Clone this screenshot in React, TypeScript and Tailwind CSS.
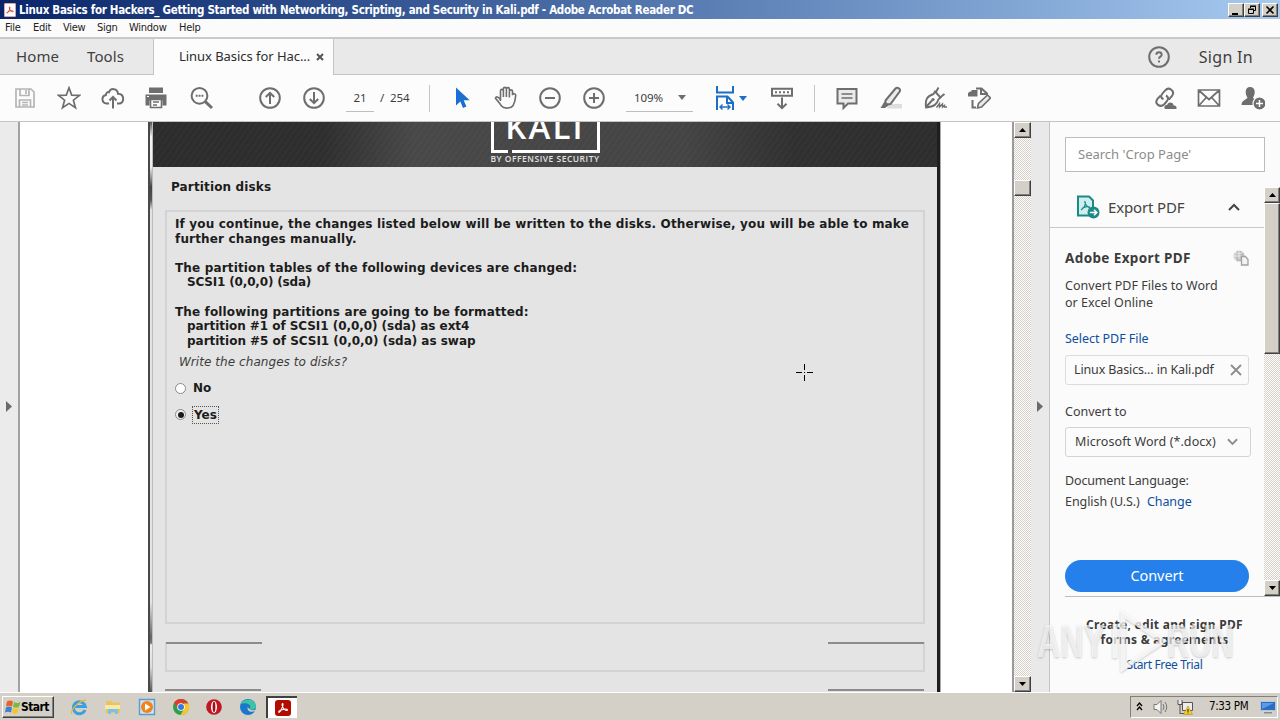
import type { ReactNode } from "react";
import clsx from "clsx";

interface GlyphProps {
  children: ReactNode;
  className?: string;
  box?: string;
}

// 24px line icon used by the toolbars
function Glyph({ children, className, box = "0 0 24 24" }: GlyphProps) {
  return (
    <svg
      viewBox={box}
      fill="none"
      stroke="currentColor"
      strokeWidth="2"
      className={clsx("shrink-0", className ?? "h-6 w-6")}
    >
      {children}
    </svg>
  );
}

function Tool({ children, color = "text-[#6e6e6e]" }: { children: ReactNode; color?: string }) {
  return (
    <button className={clsx("flex h-full w-11 shrink-0 items-center justify-center", color)}>
      <Glyph>{children}</Glyph>
    </button>
  );
}

function AcrobatMark({ className }: { className: string }) {
  return (
    <svg viewBox="0 0 16 16" fill="none" stroke="currentColor" className={className}>
      <path
        d="M7.6 3c-1.6 0-.2 4.6 2 6.6 2.200 1.800 4.200 1.300 3.600.3C12.500 8.700 7 9.300 4.500 10.800c-2.200 1.300-1.600 2.500-.6 2C5.800 11.600 9.300 3 7.600 3z"
        strokeWidth="1.2"
      />
    </svg>
  );
}

const bevel =
  "border border-t-white border-l-white border-r-[#404040] border-b-[#404040] bg-[#d4d0c8] shadow-[inset_-1px_-1px_0_#808080]";

function ScrollButton({ down, className }: { down?: boolean; className?: string }) {
  return (
    <div className={clsx("flex h-4 shrink-0 items-center justify-center", bevel, className)}>
      <svg viewBox="0 0 7 4" className={clsx("h-1 w-[7px]", down && "rotate-180")}>
        <path d="M0 4L3.500 0L7 4z" fill="#000" />
      </svg>
    </div>
  );
}

function TitleBar() {
  return (
    <div className="flex h-[19px] shrink-0 items-center bg-linear-to-r from-[#0a246a] to-[#a6caf0] pr-[2px] pl-1">
      <div className="flex h-[14px] w-3 items-center justify-center rounded-[1px] border border-[#d9a5a5] bg-white text-[#d0201c]">
        <AcrobatMark className="h-3 w-3" />
      </div>
      <span className="ml-[3px] flex-1 text-[11.500px] leading-[18px] font-bold tracking-[-0.3px] whitespace-nowrap text-white [font-family:'DejaVu_Sans_Condensed','DejaVu_Sans',sans-serif]">
        Linux Basics for Hackers_ Getting Started with Networking, Scripting, and Security in Kali.pdf - Adobe Acrobat
        Reader DC
      </span>
      <div className="flex text-black">
        <div className={clsx("h-[14px] w-4", bevel)}>
          <svg viewBox="0 0 14 12" className="h-3 w-[14px]">
            <path d="M3 9h6v2H3z" />
          </svg>
        </div>
        <div className={clsx("h-[14px] w-4", bevel)}>
          <svg viewBox="0 0 14 12" fill="none" stroke="#000" className="h-3 w-[14px]">
            <path d="M5.500 4V2.500h5v4H9M5 2h6M3.500 5.500h5v4h-5zM3 5h6" />
          </svg>
        </div>
        <div className={clsx("ml-[2px] h-[14px] w-4", bevel)}>
          <svg viewBox="0 0 14 12" fill="none" stroke="#000" strokeWidth="1.600" className="h-3 w-[14px]">
            <path d="M3.500 2.500l7 7M10.500 2.500l-7 7" />
          </svg>
        </div>
      </div>
    </div>
  );
}

function MenuBar() {
  return (
    <div className="flex h-[18px] shrink-0 items-center bg-[#fcfbfb] pl-[5px] text-[11px] tracking-[-0.25px] text-[#222] [font-family:'DejaVu_Sans_Condensed','DejaVu_Sans',sans-serif]">
      <span className="w-7">File</span>
      <span className="w-[30px]">Edit</span>
      <span className="w-[34px]">View</span>
      <span className="w-8">Sign</span>
      <span className="w-[50px]">Window</span>
      <span>Help</span>
    </div>
  );
}

function TabBar() {
  return (
    <div className="flex h-[38px] shrink-0 border-t-2 border-[#c9c9c9] bg-[#e9e9e9] text-[#3f3f3f]">
      <div className="flex w-[154px] items-center border-r border-b border-[#c4c4c4] pl-4 text-[15px] tracking-[0.1px]">
        <span className="w-[71px]">Home</span>
        <span>Tools</span>
      </div>
      <div className="flex w-[179px] items-center bg-[#fcfcfc] pl-[25px] text-[13px] text-[#2c2c2c]">
        <span className="w-[137px] tracking-[-0.05px] whitespace-nowrap">Linux Basics for Hac...</span>
        <Glyph box="0 0 8 8" className="h-2 w-2 text-[#555]">
          <path d="M1 1l6 6M7 1L1 7" />
        </Glyph>
      </div>
      <div className="flex flex-1 items-center border-b border-l border-[#c4c4c4] pr-[27px]">
        <Glyph className="mr-[28px] ml-auto h-6 w-6 text-[#6e6e6e]">
          <circle cx="12" cy="12" r="9.800" />
          <path d="M9.300 9.700c0-3.300 5.400-3.300 5.400 0 0 2-2.700 1.900-2.700 4M12 15.500v2" strokeWidth="1.900" />
        </Glyph>
        <span className="text-base tracking-[0.3px]">Sign In</span>
      </div>
    </div>
  );
}

function Toolbar() {
  return (
    <div className="flex h-[47px] shrink-0 items-center border-b border-[#c4c4c4] bg-[#fcfcfc] pl-[3px] text-[#3c3c3c]">
      <Tool color="text-[#b4b4b4]">
        <path d="M3 3h15l3 3v15H3z M7 3v6.500h9V3M13 4v4M6.500 21v-7h11v7M9 16.500h6M9 19h6" strokeWidth="1.700" />
      </Tool>
      <Tool>
        <path d="M12 1.800l2.700 7.300 7.800.3-6.100 4.800 2.100 7.500-6.500-4.300-6.500 4.300 2.100-7.500L1.500 9.400l7.800-.3z" strokeWidth="1.700" />
      </Tool>
      <Tool>
        <path d="M8 17.500H5.500a4.300 4.300 0 0 1-.6-8.500C5 6.500 7 5.800 8 6.200c1.500-4.500 8.500-4.200 9 1.600 7 .2 6.500 9.700 1 9.700h-2" />
        <path d="M12 22.500V11M8.500 14.500L12 11l3.500 3.500" />
      </Tool>
      <Tool>
        <path d="M4 1.500h14V7H4z" fill="currentColor" stroke="none" />
        <path d="M.5 8.500h21v11h-4v-5h-13v5h-4z" fill="currentColor" stroke="none" />
        <path d="M5.500 13.500h11v8h-11zM8 16h6M8 19h4" fill="#fcfcfc" strokeWidth="1.600" />
        <path d="M2 10.500h2" stroke="#fff" strokeWidth="1" />
      </Tool>
      <Tool>
        <circle cx="10.500" cy="9.800" r="7.900" />
        <path d="M16.300 15.600L23 22" strokeWidth="3" />
        <path d="M6.700 9.800h1.900M9.600 9.800h1.900M12.500 9.800h1.900" />
      </Tool>
      <div className="w-[25px]" />
      <Tool>
        <circle cx="12" cy="12" r="9.800" />
        <path d="M12 18V7M7.800 11L12 6.800l4.200 4.200" />
      </Tool>
      <Tool>
        <circle cx="12" cy="12" r="9.800" />
        <path d="M12 6v11M7.800 13l4.200 4.200 4.200-4.200" />
      </Tool>
      <div className="ml-[10px] h-[27px] w-7 border-b border-[#bdbdbd] text-center text-[11.500px] leading-[26px] tracking-[-0.2px]">
        21
      </div>
      <span className="ml-[6px] w-[49px] text-[11.500px] tracking-[-0.1px] whitespace-pre">/&nbsp; 254</span>
      <div className="mr-[10px] h-[27px] w-px bg-[#c6c6c6]" />
      <Tool color="text-[#1b6fd0]">
        <path d="M6 1.500v18l4.300-4 2.700 6.500 3.400-1.400-2.700-6.400h6z" fill="currentColor" stroke="none" />
      </Tool>
      <Tool>
        <path
          d="M6.500 15V4.800c0-1.900 2.900-1.900 2.900 0V11M9.400 11V2.800c0-1.900 3-1.900 3 0V11M12.400 11V3c0-1.900 3-1.900 3 0v8.500M15.400 11.500V5.300c0-1.900 3.100-1.900 3.100 0v4M18.500 8.800c.3-1.700 3.300-1.400 3.200.6-.2 5-1 7.600-2.700 10.300-1.600 2.500-8.800 3.700-11.500.3C5.500 17.500 3.500 14 1.500 12.300c.2-2.300 3-1.800 5 1.500"
          strokeWidth="1.600"
        />
      </Tool>
      <Tool>
        <circle cx="12" cy="12" r="9.800" />
        <path d="M7 12h10" />
      </Tool>
      <Tool>
        <circle cx="12" cy="12" r="9.800" />
        <path d="M7 12h10M12 7v10" />
      </Tool>
      <div className="ml-[10px] flex h-[27px] w-[67px] items-center border-b border-[#bdbdbd] pl-2 text-[11.500px] tracking-[-0.1px]">
        <span className="w-11">109%</span>
        <svg viewBox="0 0 8 5" className="h-[5px] w-2 fill-[#6e6e6e]">
          <path d="M0 0h8L4 5z" />
        </svg>
      </div>
      <div className="ml-[21px] flex w-[33px] items-center gap-px text-[#1b6fc4]">
        <Glyph className="-ml-px h-6 w-6">
          <path d="M4 0v6.500h16V0M4 24V10.500h10.500l5.500 6V24M14 10.500V17h6" />
          <path d="M7.500 21h9M9.500 18.500L7 21l2.500 2.500M14.500 18.500L17 21l-2.500 2.500" strokeWidth="1.400" />
        </Glyph>
        <svg viewBox="0 0 8 5" className="ml-px h-[5px] w-2 fill-current">
          <path d="M0 0h8L4 5z" />
        </svg>
      </div>
      <div className="w-[13px]" />
      <Tool>
        <path d="M2 2.800h20v7H2zM12 11.500V22M7.500 17.800L12 22.200l4.500-4.400" />
        <path d="M5 6.300h2M9 6.300h2M13 6.300h2M17 6.300h2" />
      </Tool>
      <div className="mr-[10px] ml-[10px] h-[27px] w-px bg-[#c6c6c6]" />
      <Tool>
        <path d="M2.500 3h19v14.500H13L8.500 22v-4.500h-6z" fill="#eaeaea" />
        <path d="M6.500 8h11M6.500 12h11" strokeWidth="1.600" />
      </Tool>
      <Tool>
        <path d="M11 18h12v4.500H8z" fill="#dedede" stroke="none" />
        <path d="M6.500 14.500l10-12c2-2 5.500.5 4.200 3L11.500 18l-5 .3z" fill="#eaeaea" />
        <path d="M5.500 15.500l4.500 3.800L6 22H1.500z" fill="currentColor" stroke="none" />
      </Tool>
      <Tool>
        <path d="M12 5.500l5.500 6-2 1.700c-1.500 5-4 7.300-12.500 8.300C2 13 4.500 10 10.500 8zM3 21l6-6.500" strokeWidth="1.900" />
        <circle cx="10" cy="13.500" r="1.600" fill="currentColor" stroke="none" />
        <path d="M13 6l2.500-4.500M17 11.500L21.500 8" strokeWidth="1.900" />
        <path d="M13.500 21.500l3-4v3.500l3-3v3l2-1.500V21H24" strokeWidth="1.400" />
      </Tool>
      <Tool>
        <path d="M9 2.500h5.500l5.500 5v2M14 2.500V8h5M5.500 14v7.500H9" />
        <path d="M3 5.500h1.500V4h6v6.500H1V7z" fill="currentColor" stroke="none" />
        <path d="M10.500 22l1-4.500L20.500 9l3 3-9 9z" fill="#eaeaea" strokeWidth="1.600" />
      </Tool>
      <div className="mr-[5px] ml-auto flex h-full">
        <Tool>
          <path d="M10.500 13.200c-4.500-2-2-5 1.500-8.600 4-4.600 10.500.4 7 5.400l-3.200 3.600M13 9.500c4 2.200 1.700 5-1.500 8.500-4.500 4.500-10.500-.5-7-5.200l3-3.200" />
          <path d="M12 23c-1.500-2.600.2-4 2-4 1.500-4 6.500-3 6.600.5 3 0 3.400 2 2.700 3.500z" fill="currentColor" stroke="none" />
        </Tool>
        <Tool>
          <path d="M1.500 4h21v16h-21zM2 4.500l10 9 10-9M2 19.500L9.300 11.500M22 19.500L14.700 11.500" strokeWidth="1.700" />
        </Tool>
        <Tool>
          <path d="M9 1c6 0 5.500 7.500 3 10.500.5 1.500 3 2 4 2.500-3 2-2.500 3-2 5H.5c0-5 5.500-5.500 6-7.500C4 8.500 3.500 1 9 1z" fill="currentColor" stroke="none" />
          <circle cx="18.500" cy="17.500" r="6.500" fill="currentColor" stroke="#fcfcfc" strokeWidth="1.200" />
          <path d="M18.500 14v7M15 17.500h7" stroke="#fff" strokeWidth="1.500" />
        </Tool>
      </div>
    </div>
  );
}

function Installer() {
  return (
    <div className="flex w-[793px] overflow-hidden bg-[#e4e4e4] [font-family:'DejaVu_Sans',sans-serif] text-[#1c1c1c]">
      <div className="w-[2px] shrink-0 bg-[#484848]" />
      <div className="w-[2px] shrink-0 bg-[linear-gradient(#555_0,#f4f4f4_15px,#eee_45px,#444_65px,#555_78px,#e2e2e2_88px,#e4e4e4_480px,#666_515px,#777_521px,#eee_523px,#ddd_545px,#555_570px)]" />
      <div className="w-px shrink-0 bg-[#bcbcbc]" />
      <div className="flex min-w-0 flex-1 flex-col">
        <div className="flex h-[45px] shrink-0 justify-center bg-[repeating-linear-gradient(125deg,#ffffff05_0_2px,transparent_2px_5px),linear-gradient(90deg,#2c2c2c_0,#2e2e2e_170px,#484848_260px,#444_530px,#303030_640px,#2d2d2d_100%)]">
          <div className="flex w-[110px] flex-col items-center overflow-hidden">
            <div className="relative flex h-[31px] w-[109px] shrink-0 justify-center border-x-[3px] border-b-[3px] border-white">
              <span className="-mt-[13px] text-[33px] leading-9 font-semibold tracking-[2.200px] text-white [font-family:'Open_Sans',sans-serif]">
                KALI
              </span>
              <span className="absolute -bottom-[3px] left-[14px] h-[3px] w-[4px] bg-[#444]" />
            </div>
            <span className="mt-0 text-[8.500px] leading-[11px] font-semibold tracking-[0.5px] whitespace-nowrap text-[#e2e2e2] [font-family:'Open_Sans',sans-serif]">
              BY OFFENSIVE SECURITY
            </span>
          </div>
        </div>
        <p className="mt-[13px] pl-[18px] text-[12px] leading-[15px] font-bold tracking-[0.14px]">Partition disks</p>
        <div className="mt-[15px] ml-3 h-[414px] w-[760px] shrink-0 border-2 border-[#d3d3d3] pt-[5px] pl-2 text-[12px] leading-[14.600px] font-bold">
          <p className="tracking-[0.16px] whitespace-nowrap">
            If you continue, the changes listed below will be written to the disks. Otherwise, you will be able to make
            <br />
            further changes manually.
          </p>
          <p className="mt-[14.600px] tracking-[0.16px]">The partition tables of the following devices are changed:</p>
          <p className="pl-3 tracking-[-0.17px]">SCSI1 (0,0,0) (sda)</p>
          <p className="mt-[14.600px] tracking-[0.14px]">The following partitions are going to be formatted:</p>
          <p className="pl-3 tracking-[-0.05px]">partition #1 of SCSI1 (0,0,0) (sda) as ext4</p>
          <p className="pl-3 tracking-[-0.02px]">partition #5 of SCSI1 (0,0,0) (sda) as swap</p>
          <p className="mt-[7px] pl-1 font-normal tracking-[0.07px] text-[#3c3c3c] italic">Write the changes to disks?</p>
          <div className="mt-[11px] flex items-center">
            <span className="h-[11px] w-[11px] rounded-full border border-[#8a8a8a] bg-white" />
            <span className="ml-[7px]">No</span>
          </div>
          <div className="mt-[10px] flex items-center">
            <span className="flex h-[11px] w-[11px] items-center justify-center rounded-full border border-[#8a8a8a] bg-[#f0f0f0]">
              <span className="h-[6px] w-[6px] rounded-full bg-[#1c1c1c]" />
            </span>
            <span className="ml-[6px] border border-dotted border-[#555] px-px leading-4">Yes</span>
          </div>
        </div>
        <div className="mt-[18px] ml-3 flex h-[30px] w-[760px] shrink-0 justify-between border-x-2 border-b-2 border-[#d3d3d3]">
          <span className="-ml-px h-[1.500px] w-24 bg-[#8c8c8c]" />
          <span className="-mr-px h-[1.500px] w-24 bg-[#8c8c8c]" />
        </div>
        <div className="mt-[17px] ml-3 flex w-[759px] justify-between">
          <span className="h-[2px] w-24 bg-[#8c8c8c]" />
          <span className="h-[2px] w-24 bg-[#8c8c8c]" />
        </div>
      </div>
      <div className="w-[3px] shrink-0 bg-[#1e1e1e]" />
      <div className="w-px shrink-0 bg-[#aaa]" />
    </div>
  );
}

const dither = "bg-[repeating-conic-gradient(#fff_0_25%,#d4d0c8_0_50%)] bg-[length:2px_2px]";

function ExportPanel() {
  return (
    <aside className="flex w-[231px] flex-col border-l border-[#c4c4c4] bg-[#fbfbfb] text-[#3c3c3c]">
      <div className="mt-[15px] ml-[15px] flex h-[35px] w-[200px] shrink-0 items-center border border-[#bcbcbc] bg-white pt-px pl-3 text-[13px] text-[#8c8c8c]">
        Search 'Crop Page'
      </div>
      <div className="mt-[15px] flex h-[409px] shrink-0">
        <div className="flex min-w-0 flex-1 flex-col">
          <div className="flex h-[41px] shrink-0 items-center border-b border-[#c8c8c8] pl-[26px]">
            <Glyph className="h-6 w-6 text-[#1b8a87]">
              <path d="M2 1.500h11l4 4v15H2z" fill="#cfeeee" />
              <path d="M9 6c-1 2 3 7.500 5.500 7M9.500 7c0 4-3 7-4.500 8M6 13.500c2-1.500 6-2 8-1.500" strokeWidth="1.100" />
              <circle cx="17.500" cy="17.500" r="6" fill="currentColor" stroke="none" />
              <path d="M13.800 17.500h7M18 14.700l2.800 2.800-2.800 2.800" stroke="#fff" strokeWidth="1.600" />
            </Glyph>
            <span className="ml-2 flex-1 text-[15px] tracking-[-0.15px] text-[#444]">Export PDF</span>
            <Glyph box="0 0 12 8" className="mr-6 h-2 w-3 text-[#444]">
              <path d="M1 7l5-5 5 5" />
            </Glyph>
          </div>
          <div className="flex flex-col pt-5 pl-[15px] text-[12.500px]">
            <div className="flex h-5 items-center">
              <b className="w-[168px] text-[13.500px] tracking-[0.38px]">Adobe Export PDF</b>
              <Glyph box="0 0 16 16" className="h-4 w-4 text-[#a2a2a2]">
                <circle cx="6" cy="6" r="5.500" fill="#bdbdbd" stroke="none" />
                <path d="M0 6h9M6 0v9M2.500 2c2 2 5 2 7 0M3 1c-1.500 3-1.500 7 0 10" stroke="#f3f3f3" strokeWidth=".8" />
                <path d="M8.500 6.500h4l2.500 3v5.500H8.500z" fill="#f3f3f3" strokeWidth="1.300" />
              </Glyph>
            </div>
            <p className="mt-[9px] leading-[17px] tracking-[0.03px] whitespace-nowrap">
              Convert PDF Files to Word
              <br />
              or Excel Online
            </p>
            <a className="mt-[19px] leading-[17px] tracking-[-0.05px] text-[#0d4f9e]">Select PDF File</a>
            <div className="mt-2 flex h-[30px] w-[184px] items-center rounded-[3px] border border-[#dcdcdc] pl-[8px]">
              <span className="w-[156px] tracking-[-0.13px] whitespace-nowrap">Linux Basics... in Kali.pdf</span>
              <Glyph box="0 0 12 12" className="h-3 w-3 text-[#8c8c8c]">
                <path d="M1 1l10 10M11 1L1 11" strokeWidth="1.800" />
              </Glyph>
            </div>
            <span className="mt-[18px] leading-[17px]">Convert to</span>
            <div className="mt-[7px] flex h-[30px] w-[186px] items-center rounded-[3px] border border-[#d4d4d4] pl-[9px]">
              <span className="w-[152px] pt-px tracking-[0.08px] whitespace-nowrap">Microsoft Word (*.docx)</span>
              <Glyph box="0 0 12 8" className="h-2 w-[11px] text-[#8c8c8c]">
                <path d="M1 1l5 5 5-5" />
              </Glyph>
            </div>
            <span className="mt-[15px] leading-[17px] tracking-[-0.15px]">Document Language:</span>
            <span className="mt-1 leading-[17px] tracking-[-0.07px]">
              English (U.S.) <a className="ml-1 text-[#0d4f9e]">Change</a>
            </span>
            <button className="mt-[50px] h-8 w-[184px] shrink-0 rounded-full bg-[#2680eb] pb-px text-[14.500px] tracking-[-0.1px] text-white">
              Convert
            </button>
          </div>
        </div>
        <div className={clsx("flex w-4 shrink-0 flex-col", dither)}>
          <ScrollButton />
          <div className={clsx("h-[151px]", bevel)} />
          <ScrollButton down className="mt-auto" />
        </div>
      </div>
      <div className="ml-[15px] flex flex-1 flex-col items-center border-t border-[#bcbcbc] pt-5 pr-4 text-center text-[12px]">
        <b className="leading-[15px] tracking-[0.3px] whitespace-nowrap">
          Create, edit and sign PDF
          <br />
          forms & agreements
        </b>
        <a className="mt-[10px] text-[12px] leading-4 tracking-[-0.35px] text-[#0d4f9e]">Start Free Trial</a>
      </div>
    </aside>
  );
}

function Watermark() {
  return (
    <div className="pointer-events-none absolute top-[608px] left-[1037px] flex h-[66px] w-[200px] items-center text-[46px] leading-none font-bold text-white/65 [font-family:'Liberation_Sans',sans-serif] [text-shadow:0_1px_3px_#00000038]">
      <span className="origin-left scale-x-[0.7]">ANY</span>
      <svg
        viewBox="0 0 56 62"
        fill="none"
        className="absolute left-[74px] h-[62px] w-14 drop-shadow-[0_1px_1px_#00000040]"
      >
        <path d="M4 14v34M12 4v54l40-27z" stroke="#fff" strokeOpacity=".75" strokeWidth="5" />
      </svg>
      <span className="absolute right-[3px] origin-right scale-x-[0.67]">RUN</span>
    </div>
  );
}

function Taskbar() {
  return (
    <div className="flex h-7 shrink-0 items-center border-t border-white bg-[#d4d0c8] pl-[2px] text-black [font-family:'DejaVu_Sans_Condensed','DejaVu_Sans',sans-serif]">
      <div className={clsx("flex h-[22px] w-[52px] items-center pl-[2px]", bevel)}>
        <svg viewBox="0 0 16 16" className="h-4 w-4 shrink-0">
          <path d="M2 2.500q3-2 6 0L7 7.500q-3-1.500-6 0z" fill="#e8602c" />
          <path d="M9 3q3 2 6.500 0L14 8q-3 1.500-6 0z" fill="#7db93c" />
          <path d="M1 8.500q3-2 6 0L6 13.500q-3-1.500-6 0z" fill="#3f7fd0" />
          <path d="M8 9q3 2 6 0l-1.500 5q-3 1.500-5.500 0z" fill="#f5c42c" />
        </svg>
        <b className="text-[12px] tracking-[-0.6px]">Start</b>
      </div>
      <svg viewBox="0 0 18 18" fill="none" className="ml-4 h-[18px] w-[18px]">
        <path d="M15 12a6 6 0 1 1 .3-3.500H5" stroke="#3aa0e0" strokeWidth="3" />
        <path d="M2 16C-1 13 10 2 16 2" stroke="#e9b93a" strokeWidth="1.300" />
      </svg>
      <svg viewBox="0 0 18 18" className="ml-4 h-[18px] w-[18px]">
        <path d="M2 3h5l1 1.500h8V15H2z" fill="#e9c45c" />
        <path d="M1 7h15v4H1z" fill="#f9e9a6" />
        <path d="M4 16v-5h10v5h-3v-2H7v2z" fill="#7cc0e8" />
      </svg>
      <svg viewBox="0 0 18 18" className="ml-4 h-[18px] w-[18px]">
        <path d="M1.500 1.500h15v15h-15z" fill="#cfe3f4" stroke="#5a9bd0" strokeWidth="1.400" />
        <circle cx="9" cy="9" r="6" fill="#f08418" />
        <path d="M7 5.500v7L12.500 9z" fill="#fff" />
      </svg>
      <svg viewBox="0 0 18 18" className="ml-4 h-[18px] w-[18px]">
        <circle cx="9" cy="9" r="8" fill="#2f9e4c" />
        <path d="M2 5a8 8 0 0 1 14.200.5H9L5.500 9z" fill="#e03c2c" />
        <path d="M16.400 5.500A8 8 0 0 1 8.500 17L12 11V5.500z" fill="#f8c52c" />
        <circle cx="9" cy="9" r="3.800" fill="#fff" />
        <circle cx="9" cy="9" r="3" fill="#3a78e0" />
      </svg>
      <svg viewBox="0 0 18 18" className="ml-[15px] h-[18px] w-[18px]">
        <circle cx="9" cy="9" r="7.800" fill="#c01822" />
        <ellipse cx="9" cy="9" rx="3" ry="6" fill="#fff" />
        <ellipse cx="9" cy="9" rx="1.400" ry="5.200" fill="#a01018" />
      </svg>
      <svg viewBox="0 0 18 18" className="ml-4 h-[18px] w-[18px]">
        <circle cx="9" cy="9" r="8" fill="#1978c8" />
        <path d="M1.500 6C4 .5 16-.5 17 8c0 4-4.500 4.500-6.500 3 3-4-3-7-9-5z" fill="#3cc4a4" />
        <path d="M17 12.500c-5 2.500-9 1-8.500-3.500l2 2c2 1.800 5 1.500 6.500.5z" fill="#d4d0c8" />
      </svg>
      <div className="ml-[9px] flex h-[22px] w-[31px] items-center justify-center border-t-2 border-l-2 border-[#404040] bg-white">
        <div className="flex h-4 w-4 items-center justify-center rounded-[3px] bg-[#b30b00] text-white">
          <AcrobatMark className="h-[14px] w-[14px]" />
        </div>
      </div>
      <div className="mr-[2px] ml-auto flex h-[22px] w-[148px] items-center border border-t-[#808080] border-r-white border-b-white border-l-[#808080] pl-[5px]">
        <svg viewBox="0 0 7 9" fill="none" stroke="#000" strokeWidth="1.300" className="h-[9px] w-[7px]">
          <path d="M1 4l2.500-3L6 4M1 8l2.500-3L6 8" />
        </svg>
        <svg viewBox="0 0 16 16" fill="none" className="ml-[10px] h-4 w-4">
          <path d="M1 5.500h3l4-4v13l-4-4H1z" fill="#f4f4f4" stroke="#777" />
          <path d="M10 5q2 3 0 6M12 3q3.500 5 0 10" stroke="#777" />
        </svg>
        <svg viewBox="0 0 16 16" fill="none" className="ml-2 h-4 w-4">
          <path d="M5.500 3.500h10v8h-10zM1 1v4.500h4V1M3 5.500V15M3 14.500h6" fill="#ececec" stroke="#555" />
          <path d="M11 7l4.500 8.500h-9z" fill="#f6cf2c" stroke="#b18b10" strokeWidth=".6" />
          <path d="M11 10v3M11 13.500v1" stroke="#222" />
        </svg>
        <span className="ml-4 w-[51px] text-[11.500px] tracking-[-0.35px] whitespace-nowrap">7:33 PM</span>
        <svg viewBox="0 0 16 14" className="h-[14px] w-4">
          <path d="M.5 1.500h15v9H.5z" fill="#2c6cc4" stroke="#b4c8e0" />
          <path d="M2 3h12L2 9z" fill="#5c9ae4" />
          <path d="M4 12h8v1.500H4z" fill="#8a8a8a" />
        </svg>
      </div>
    </div>
  );
}

export default function App() {
  return (
    <div className="relative flex h-[720px] w-[1280px] flex-col overflow-hidden bg-white [font-family:'Noto_Sans','Open_Sans',sans-serif]">
      <TitleBar />
      <MenuBar />
      <TabBar />
      <Toolbar />
      <main className="flex h-[570px] shrink-0">
        <div className="flex w-5 items-center border-r-2 border-[#a2a2a2] bg-[#ebebeb] pb-[2px] pl-[6px]">
          <svg viewBox="0 0 6 11" className="h-[11px] w-[6px] fill-[#6a6a6a]">
            <path d="M0 0l6 5.500L0 11z" />
          </svg>
        </div>
        <div className="flex flex-1 pl-32">
          <Installer />
        </div>
        <div className={clsx("flex w-[19px] flex-col border-l-2 border-[#9c989c]", dither)}>
          <ScrollButton />
          <div className={clsx("mt-[42px] h-4", bevel)} />
          <ScrollButton down className="mt-auto" />
        </div>
        <div className="flex w-[18px] items-center bg-[#e9e9e9] pb-[2px] pl-[6px]">
          <svg viewBox="0 0 6 11" className="h-[11px] w-[6px] fill-[#6a6a6a]">
            <path d="M0 0l6 5.500L0 11z" />
          </svg>
        </div>
        <ExportPanel />
      </main>
      <Taskbar />
      <Watermark />
      {/* precision-select pointer */}
      <svg viewBox="0 0 17 17" stroke="#000" className="absolute top-[364px] left-[796px] h-[17px] w-[17px]">
        <path d="M8.500 0v6M8.500 11v6M0 8.500h6M11 8.500h6M8 8.500h1" />
      </svg>
    </div>
  );
}
